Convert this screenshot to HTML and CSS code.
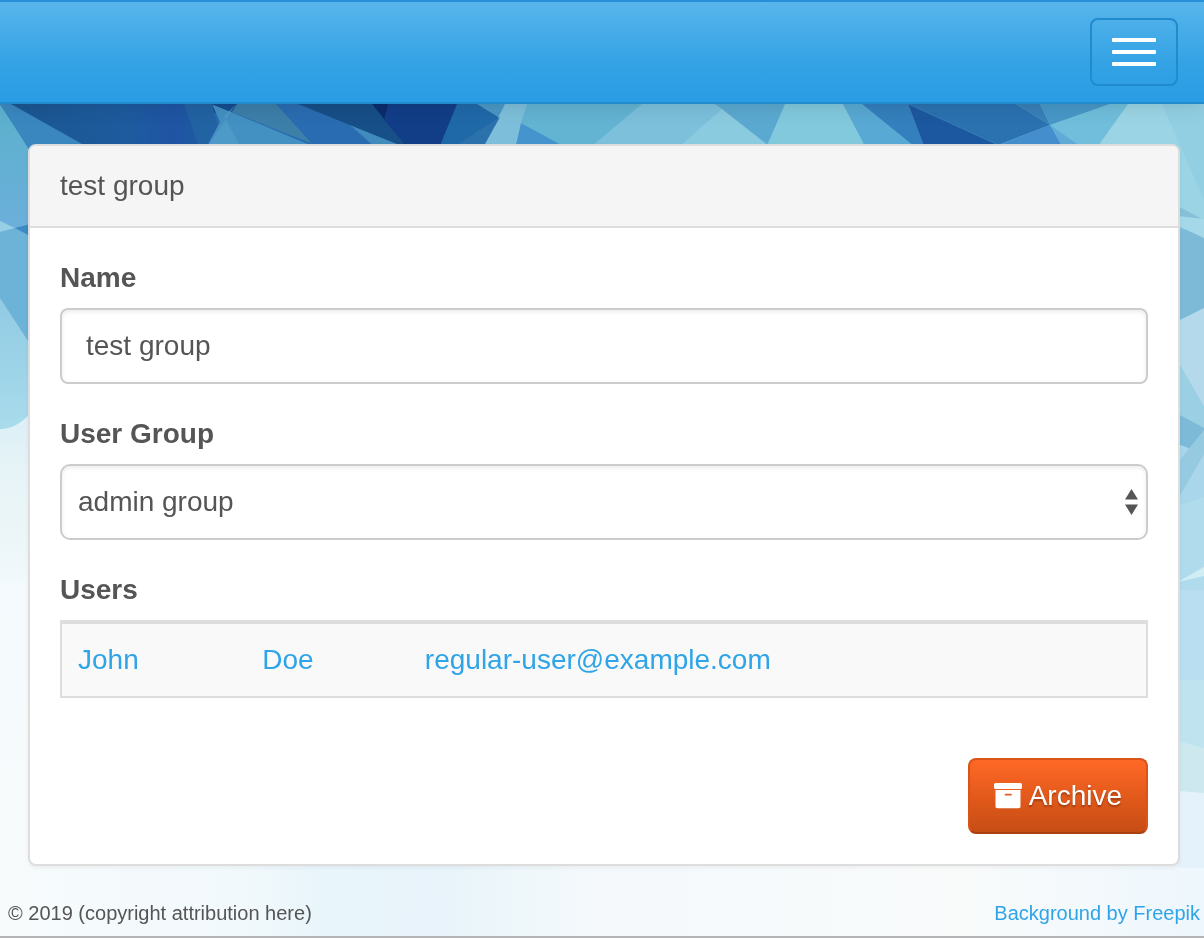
FILE: index.html
```html
<!DOCTYPE html>
<html lang="en">
<head>
<meta charset="utf-8">
<meta name="viewport" content="width=device-width, initial-scale=1">
<title>test group</title>
<link rel="stylesheet" href="styles.css">
</head>
<body>
<svg class="backdrop" viewBox="0 0 1204 938" preserveAspectRatio="none" aria-hidden="true">
  <defs>
    <linearGradient id="fade" x1="0" y1="0" x2="0" y2="1">
      <stop offset="0" stop-color="#d9eff6"/><stop offset=".15" stop-color="#e8f4f7"/>
      <stop offset=".28" stop-color="#edf6f9"/>
      <stop offset=".35" stop-color="#f4fafd"/><stop offset="1" stop-color="#f9fbfb"/>
    </linearGradient>
    <linearGradient id="left" x1="0" y1="0" x2="0" y2="1">
      <stop offset="0" stop-color="#5bb0cc"/><stop offset="1" stop-color="#6cafdb"/>
    </linearGradient>
    <linearGradient id="leftLow" x1="0" y1="0" x2="0" y2="1">
      <stop offset="0" stop-color="#90cae3"/><stop offset="1" stop-color="#a9dcec"/>
    </linearGradient>
    <linearGradient id="dark" x1="0" y1="0" x2="1" y2="0">
      <stop offset="0" stop-color="#1b568f"/><stop offset=".6" stop-color="#1d5b9f"/>
      <stop offset=".8" stop-color="#1f54a4"/><stop offset="1" stop-color="#1f5f9e"/>
    </linearGradient>
    <linearGradient id="base" x1="0" y1="0" x2="1" y2="0">
      <stop offset="0" stop-color="#f7fbfc"/><stop offset=".2" stop-color="#f2f9fc"/>
      <stop offset=".27" stop-color="#e8f5fb"/><stop offset=".37" stop-color="#e8f4fa"/>
      <stop offset=".46" stop-color="#f1f8fb"/><stop offset=".5" stop-color="#f5f9fc"/>
      <stop offset=".8" stop-color="#f9fbfb"/><stop offset="1" stop-color="#eef7fd"/>
    </linearGradient>
  </defs>
  <rect y="400" width="1204" height="538" fill="url(#fade)"/>
  <rect y="860" width="1204" height="78" fill="url(#base)"/>
  <path fill="#e9f3fb" d="M424 866h8l20 72h-54z"/>
  <path fill="url(#dark)" d="M0 0h218v200H0z"/>
  <path fill="#2a6cb1" d="M210 0h290v200H210z"/>
  <path fill="#6db6d8" d="M484 0h720v200H484z"/>
  <path fill="url(#left)" d="M0 104 28 146 60 230H0z"/>
  <path fill="#3a87c0" d="M0 104h11l71 40v20H40L28 148z"/>
  <path fill="#2263a3" d="M184 104h28l6 22-10 18h-10z"/>
  <path fill="#164c91" d="M212 104h26l-16 14-8-6z"/>
  <path fill="#4390c3" d="m212 104 105 44H206l14-26z"/>
  <path fill="#164c91" d="M211 104h26l-5 8z"/>
  <path fill="#3c7fa9" d="M237 104h39l42 42-86-34z"/>
  <path fill="#57a4cd" fill-opacity=".5" d="m236 104-28 42h32l-16-30z"/>
  <path fill="#2a6cb1" d="M276 104h22l112 44h-94z"/>
  <path fill="#3f8bbd" d="m350 125 60 23h-34z"/>
  <path fill="#174f88" d="M298 104h74l40 46-30-12z"/>
  <path fill="#0b2c6c" d="M372 104h17l-4 16z"/>
  <path fill="#123e88" d="M388 104h70l-18 42h-34l-22-26z"/>
  <path fill="#2069a9" d="M457 104h20l24 14-41 28h-20z"/>
  <path fill="#4a98c6" d="M477 104h28l-5 14z"/>
  <path fill="#7dbfda" d="M505 104h22l-11 42h-32z"/>
  <path fill="#2b72ad" d="m500 117-42 27h27z"/>
  <path fill="#4594ce" d="m521 123 42 22h-47z"/>
  <path fill="#63b3d3" d="M527 104h115l-50 42h-29l-42-23z"/>
  <path fill="#7cc0dc" d="M642 104h74l54 42H592z"/>
  <path fill="#8bcbe0" d="m722 109 46 37h-88z"/>
  <path fill="#5ba9d1" d="M715 104h71l-19 40-45-35z"/>
  <path fill="#82c9dd" d="M785 104h58l22 42h-98z"/>
  <path fill="#58a9d4" d="M843 104h19l54 42h-51z"/>
  <path fill="#347fbd" d="M862 104h46l16 42h-10z"/>
  <path fill="#1c589f" d="m908 104 92 42h-76z"/>
  <path fill="#2b72b1" d="M908 104h108l34 21-52 20z"/>
  <path fill="#3880b8" d="M1016 104h24l10 21z"/>
  <path fill="#4798c8" d="M1040 104h70l-60 21z"/>
  <path fill="#448ecd" d="m1050 125 12 21h-66z"/>
  <path fill="#60aad8" d="m1050 125 32 21h-20z"/>
  <path fill="#70bedc" d="M1110 104h19l-31 42h-18l-30-21z"/>
  <path fill="#9bd5e5" d="M1128 104h76v140h-30l-76-98z"/>
  <path fill="#92cfe3" d="M1162 104h42v96z"/>
  <path fill="#6cb3d7" d="M0 230h30v115L0 320z"/>
  <path fill="#97cfe5" d="m0 221 15 7-15 4z"/>
  <path fill="#3d8bc2" d="m15 228 15-4v12z"/>
  <path fill="url(#leftLow)" d="m0 298 30 46v70Q14 430 0 429z"/>
  <path fill="#7cbad8" d="M1178 228h26v250h-26z"/>
  <path fill="#86c0d8" d="m1178 206 26 14v10h-26z"/>
  <path fill="#a5d8e8" d="m1178 216 26 3v19l-26-12z"/>
  <path fill="#b3d9eb" d="m1178 321 26-13v100l-26-46z"/>
  <path fill="#9bd0e4" d="m1178 362 26 44v22l-26-14z"/>
  <path fill="#a9d6ea" d="m1178 444 26 10v56h-26z"/>
  <path fill="#96cae1" d="m1178 462 26-32v24l-26 45z"/>
  <path fill="#b0dbed" d="m1178 506 26-9v240l-26 4z"/>
  <path fill="#b9ddf1" d="M1178 590h26v90h-26z"/>
  <path fill="#d0edf4" d="m1178 582 26-15v9z"/>
  <path fill="#bfe3ef" d="M1178 680h26v70h-26z"/>
  <path fill="#cee8f0" d="m1178 741 26 7v45h-26z"/>
  <path fill="#e4f3fb" d="m1178 791 26 2v75h-26z"/>
</svg>

<div class="page">
  <nav class="navbar">
    <button class="navbar-toggle" type="button" aria-label="Toggle navigation">
      <span class="icon-bar"></span>
      <span class="icon-bar"></span>
      <span class="icon-bar"></span>
    </button>
  </nav>

  <main class="panel">
    <h1 class="panel-heading">test group</h1>
    <form class="panel-body">
      <div class="form-group">
        <label for="name">Name</label>
        <input class="form-control" id="name" type="text" value="test group">
      </div>
      <div class="form-group">
        <label for="group">User Group</label>
        <div class="select-wrap">
          <select class="form-control form-select" id="group">
            <option>admin group</option>
          </select>
          <svg class="select-arrows" viewBox="0 0 13 26" aria-hidden="true">
            <path d="M6.500 0 13 10.500H0zM0 15.500h13L6.500 26z"/>
          </svg>
        </div>
      </div>
      <div class="form-group">
        <h2 class="group-title" id="users-title">Users</h2>
        <table class="users" aria-labelledby="users-title">
          <tbody>
            <tr>
              <td class="col-first"><a href="#user">John</a></td>
              <td class="col-last"><a href="#user">Doe</a></td>
              <td><a href="#user">regular-user@example.com</a></td>
            </tr>
          </tbody>
        </table>
      </div>
      <div class="actions">
        <button class="btn-archive" type="button">
          <svg class="archive-icon" viewBox="0 0 28 26" aria-hidden="true">
            <path fill-rule="evenodd" d="M1.500 0h25Q28 0 28 1.500v3Q28 6 26.500 6h-25Q0 6 0 4.500v-3Q0 0 1.500 0zM1.500 7h25v16.500q0 1.800-1.800 1.800H3.300q-1.800 0-1.800-1.800zM11.300 10.700q-.6 0-.6.700v.5q0 .7.600.7h5.900q.6 0 .6-.7v-.5q0-.7-.6-.7z"/>
          </svg>
          Archive
        </button>
      </div>
    </form>
  </main>

  <footer class="footer">
    <span>© 2019 (copyright attribution here)</span>
    <a href="#freepik">Background by Freepik</a>
  </footer>
</div>
</body>
</html>
```

FILE: styles.css
```css
* {
  box-sizing: border-box;
}

body {
  margin: 0;
  color: #555;
  font: 28px/40px "Liberation Sans", Arial, sans-serif;
}

a {
  color: #2fa4e7;
  text-decoration: none;
}

.backdrop {
  position: fixed;
  inset: 0;
  z-index: -1;
  width: 100%;
  height: 100%;
}

.page {
  display: flex;
  flex-direction: column;
  min-height: 100vh;
  border-bottom: 2px solid #b4b4b6;
}

.navbar {
  display: flex;
  justify-content: flex-end;
  padding: 16px 26px;
  border-top: 2px solid #2390d9;
  border-bottom: 2px solid #208bcd;
  background: linear-gradient(#58b5eb, #34a3e5 60%, #299ce4);
  box-shadow: 0 2px 20px rgba(0, 0, 0, 0.12);
}

.navbar-toggle {
  display: flex;
  flex-direction: column;
  gap: 8px;
  padding: 18px 20px;
  border: 2px solid #208bcd;
  border-radius: 8px;
  background: transparent;
}

.icon-bar {
  width: 44px;
  height: 4px;
  border-radius: 1px;
  background: #fff;
}

.panel {
  margin: 40px 24px 0 28px;
  border: 2px solid #ddd;
  border-radius: 8px;
  background: #fff;
  box-shadow: 0 2px 4px rgba(0, 0, 0, 0.05);
}

.panel-heading {
  margin: 0;
  padding: 20px 30px;
  border-bottom: 2px solid #ddd;
  border-radius: 6px 6px 0 0;
  background: #f5f5f5;
  font-size: 28px;
  font-weight: 400;
}

.panel-body {
  padding: 30px;
}

.form-group {
  margin-bottom: 30px;
}

.form-group label,
.group-title {
  display: block;
  margin: 0 0 10px;
  font-size: 28px;
  font-weight: 700;
}

.form-control {
  display: block;
  width: 100%;
  height: 76px;
  padding: 16px 24px;
  border: 2px solid #ccc;
  border-radius: 8px;
  background: #fff;
  box-shadow: inset 0 2px 4px rgba(0, 0, 0, 0.08);
  color: #555;
  font: inherit;
}

.select-wrap {
  position: relative;
}

.form-select {
  padding: 16px;
  border-radius: 10px;
  appearance: none;
}

.select-arrows {
  position: absolute;
  top: 25px;
  right: 10px;
  width: 13px;
  height: 26px;
  fill: #555;
  pointer-events: none;
}

.users {
  width: 100%;
  border: 2px solid #ddd;
  border-spacing: 0;
  background: #f9f9f9;
  table-layout: fixed;
}

.users td {
  padding: 16px;
  border-top: 2px solid #ddd;
}

.users .col-first {
  width: 17%;
}

.users .col-last {
  width: 15%;
}

.actions {
  display: flex;
  justify-content: flex-end;
  padding-top: 30px;
}

.btn-archive {
  display: flex;
  align-items: center;
  gap: 7px;
  padding: 16px 24px;
  border: 2px solid #d9541a;
  border-bottom-color: #a94011;
  border-radius: 8px;
  background: linear-gradient(#ff6826, #dd5719 60%, #c64d16);
  color: #fff;
  font: inherit;
  text-shadow: 0 2px 2px rgba(0, 0, 0, 0.3);
}

.archive-icon {
  width: 28px;
  height: 26px;
  fill: #fff;
}

.footer {
  display: flex;
  flex-wrap: wrap;
  justify-content: space-between;
  margin-top: auto;
  padding: 0 4px 8px 8px;
  font-size: 20px;
  line-height: 30px;
}
```
